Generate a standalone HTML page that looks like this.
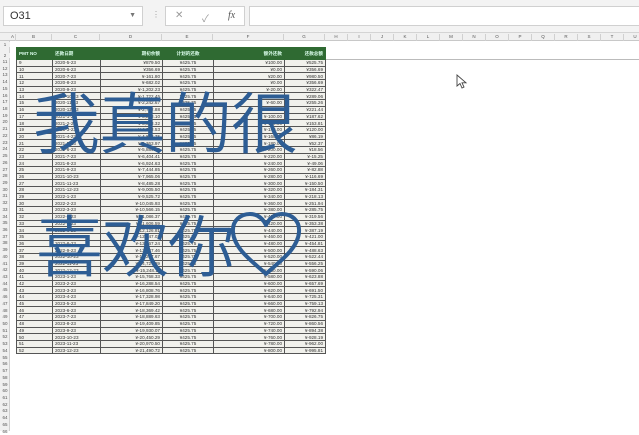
<!DOCTYPE html>
<html><head><meta charset="utf-8"><style>
*{margin:0;padding:0;box-sizing:border-box}
body{width:639px;height:431px;overflow:hidden;background:#fff;font-family:"Liberation Sans","Noto Sans CJK SC",sans-serif;position:relative}
.top{position:absolute;left:0;top:0;width:639px;height:33px;background:#f3f3f3;border-bottom:1px solid #d4d4d4}
.nb{position:absolute;left:3px;top:6px;width:140px;height:20px;background:#fff;border:1px solid #d0d0d0;font-size:11px;color:#333;padding:3px 6px}
.nb span{position:absolute;right:6px;top:5px;font-size:7px;color:#777}
.fx{position:absolute;left:165px;top:6px;width:80px;height:20px;background:#fff;border:1px solid #d0d0d0;font-size:10px;color:#999}
.fb{position:absolute;left:249px;top:6px;width:392px;height:20px;background:#fff;border:1px solid #d0d0d0}
.ch{position:absolute;left:0;top:33px;width:639px;height:8px;background:#f0f0f0;border-bottom:1px solid #c8c8c8;font-size:4.5px;color:#555}
.ch div{position:absolute;top:1px;text-align:center;border-right:1px solid #d0d0d0;height:7px}
.rh{position:absolute;left:0;width:10px;font-size:4.5px;color:#555;text-align:center;background:#f0f0f0}
table{position:absolute;left:16px;top:47px;border-collapse:collapse;font-size:4.6px;color:#333;table-layout:fixed}
td{border:1px solid #555;height:6.7px;line-height:5px;padding:0 2px;white-space:nowrap;overflow:hidden;background:#f1f1ec}
tr.h td{background:#2f6a32;color:#dfe;height:12px;font-weight:bold;border-color:#2f6a32}
td:nth-child(3),td:nth-child(5),td:nth-child(6){text-align:right}
td:nth-child(4),td:nth-child(7){text-align:center}
.big{position:absolute;font-family:"Noto Sans CJK SC",sans-serif;font-weight:350;color:#2d5d94;font-size:67px;line-height:1;letter-spacing:-1px;white-space:nowrap}
</style></head><body>
<div class="top">
<div class="nb">O31<span>▼</span></div>
<div style="position:absolute;left:152px;top:10px;font-size:8px;color:#999">⋮</div>
<div class="fx"><span style="position:absolute;left:9px;top:3px">✕</span><span style="position:absolute;left:36px;top:3px">✓</span><span style="position:absolute;left:62px;top:3px;font-style:italic;font-family:'Liberation Serif';color:#555">fx</span></div>
<div class="fb"></div>
</div>
<div class="ch">
<div style="left:10px;width:6px">A</div><div style="left:16px;width:36px">B</div><div style="left:52px;width:48px">C</div><div style="left:100px;width:62px">D</div><div style="left:162px;width:51px">E</div><div style="left:213px;width:71px">F</div><div style="left:284px;width:41px">G</div>
<div style="left:325px;width:23px">H</div><div style="left:348px;width:23px">I</div><div style="left:371px;width:23px">J</div><div style="left:394px;width:23px">K</div><div style="left:417px;width:23px">L</div><div style="left:440px;width:23px">M</div><div style="left:463px;width:23px">N</div><div style="left:486px;width:23px">O</div><div style="left:509px;width:23px">P</div><div style="left:532px;width:23px">Q</div><div style="left:555px;width:23px">R</div><div style="left:578px;width:23px">S</div><div style="left:601px;width:23px">T</div><div style="left:624px;width:23px">U</div>
</div>
<div style="position:absolute;left:0;top:41px;width:10px;height:390px;background:#f0f0f0;border-right:1px solid #d0d0d0"></div>
<div class="rh" style="top:42px">1</div><div class="rh" style="top:53px">2</div>
<div style="position:absolute;left:325px;top:59px;width:314px;height:1px;background:#bbb"></div>
<div id="rn" style="position:absolute;left:0;top:59px;width:10px;font-size:4.5px;color:#555;text-align:center;line-height:6.72px">11<br>12<br>13<br>14<br>15<br>16<br>17<br>18<br>19<br>20<br>21<br>22<br>23<br>24<br>25<br>26<br>27<br>28<br>29<br>30<br>31<br>32<br>33<br>34<br>35<br>36<br>37<br>38<br>39<br>40<br>41<br>42<br>43<br>44<br>45<br>46<br>47<br>48<br>49<br>50<br>51<br>52<br>53<br>54<br>55<br>56<br>57<br>58<br>59<br>60<br>61<br>62<br>63<br>64<br>65<br>66</div>
<table>
<colgroup><col style="width:36px"><col style="width:48px"><col style="width:62px"><col style="width:51px"><col style="width:71px"><col style="width:41px"></colgroup>
<tr class="h"><td>PMT NO</td><td>还款日期</td><td>期初余额</td><td>计划的还款</td><td>额外还款</td><td>还款总额</td></tr>
<tr><td>9</td><td>2020-5-23</td><td>¥879.50</td><td>¥425.75</td><td>¥100.00</td><td>¥525.75</td></tr>
<tr><td>10</td><td>2020-6-23</td><td>¥356.69</td><td>¥425.75</td><td>¥0.00</td><td>¥356.69</td></tr>
<tr><td>11</td><td>2020-7-23</td><td>¥-161.80</td><td>¥425.75</td><td>¥20.00</td><td>¥980.50</td></tr>
<tr><td>12</td><td>2020-8-23</td><td>¥-682.02</td><td>¥425.75</td><td>¥0.00</td><td>¥356.69</td></tr>
<tr><td>13</td><td>2020-9-23</td><td>¥-1,202.23</td><td>¥425.75</td><td>¥-20.00</td><td>¥322.47</td></tr>
<tr><td>14</td><td>2020-10-23</td><td>¥-1,722.45</td><td>¥425.75</td><td>¥-40.00</td><td>¥289.06</td></tr>
<tr><td>15</td><td>2020-11-23</td><td>¥-2,242.67</td><td>¥425.75</td><td>¥-60.00</td><td>¥255.26</td></tr>
<tr><td>16</td><td>2020-12-23</td><td>¥-2,762.88</td><td>¥425.75</td><td>¥-80.00</td><td>¥221.44</td></tr>
<tr><td>17</td><td>2021-1-23</td><td>¥-3,283.10</td><td>¥425.75</td><td>¥-100.00</td><td>¥187.62</td></tr>
<tr><td>18</td><td>2021-2-23</td><td>¥-3,803.32</td><td>¥425.75</td><td>¥-120.00</td><td>¥153.81</td></tr>
<tr><td>19</td><td>2021-3-23</td><td>¥-4,323.53</td><td>¥425.75</td><td>¥-140.00</td><td>¥120.00</td></tr>
<tr><td>20</td><td>2021-4-23</td><td>¥-4,843.75</td><td>¥425.75</td><td>¥-160.00</td><td>¥86.19</td></tr>
<tr><td>21</td><td>2021-5-23</td><td>¥-5,363.97</td><td>¥425.75</td><td>¥-180.00</td><td>¥52.37</td></tr>
<tr><td>22</td><td>2021-6-23</td><td>¥-5,884.19</td><td>¥425.75</td><td>¥-200.00</td><td>¥18.56</td></tr>
<tr><td>23</td><td>2021-7-23</td><td>¥-6,404.41</td><td>¥425.75</td><td>¥-220.00</td><td>¥-15.25</td></tr>
<tr><td>24</td><td>2021-8-23</td><td>¥-6,924.63</td><td>¥425.75</td><td>¥-240.00</td><td>¥-49.06</td></tr>
<tr><td>25</td><td>2021-9-23</td><td>¥-7,444.85</td><td>¥425.75</td><td>¥-260.00</td><td>¥-82.88</td></tr>
<tr><td>26</td><td>2021-10-23</td><td>¥-7,965.06</td><td>¥425.75</td><td>¥-280.00</td><td>¥-116.69</td></tr>
<tr><td>27</td><td>2021-11-23</td><td>¥-8,485.28</td><td>¥425.75</td><td>¥-300.00</td><td>¥-150.50</td></tr>
<tr><td>28</td><td>2021-12-23</td><td>¥-9,005.50</td><td>¥425.75</td><td>¥-320.00</td><td>¥-184.31</td></tr>
<tr><td>29</td><td>2022-1-23</td><td>¥-9,525.72</td><td>¥425.75</td><td>¥-340.00</td><td>¥-218.13</td></tr>
<tr><td>30</td><td>2022-2-23</td><td>¥-10,045.93</td><td>¥425.75</td><td>¥-360.00</td><td>¥-251.94</td></tr>
<tr><td>31</td><td>2022-3-23</td><td>¥-10,566.15</td><td>¥425.75</td><td>¥-380.00</td><td>¥-285.75</td></tr>
<tr><td>32</td><td>2022-4-23</td><td>¥-11,086.37</td><td>¥425.75</td><td>¥-400.00</td><td>¥-319.56</td></tr>
<tr><td>33</td><td>2022-5-23</td><td>¥-11,606.59</td><td>¥425.75</td><td>¥-420.00</td><td>¥-353.38</td></tr>
<tr><td>34</td><td>2022-6-23</td><td>¥-12,126.81</td><td>¥425.75</td><td>¥-440.00</td><td>¥-387.19</td></tr>
<tr><td>35</td><td>2022-7-23</td><td>¥-12,647.02</td><td>¥425.75</td><td>¥-460.00</td><td>¥-421.00</td></tr>
<tr><td>36</td><td>2022-8-23</td><td>¥-13,167.24</td><td>¥425.75</td><td>¥-480.00</td><td>¥-454.81</td></tr>
<tr><td>37</td><td>2022-9-23</td><td>¥-13,687.46</td><td>¥425.75</td><td>¥-500.00</td><td>¥-488.63</td></tr>
<tr><td>38</td><td>2022-10-23</td><td>¥-14,207.67</td><td>¥425.75</td><td>¥-520.00</td><td>¥-522.44</td></tr>
<tr><td>39</td><td>2022-11-23</td><td>¥-14,727.89</td><td>¥425.75</td><td>¥-540.00</td><td>¥-556.25</td></tr>
<tr><td>40</td><td>2022-12-23</td><td>¥-15,248.11</td><td>¥425.75</td><td>¥-560.00</td><td>¥-590.06</td></tr>
<tr><td>41</td><td>2023-1-23</td><td>¥-15,768.33</td><td>¥425.75</td><td>¥-580.00</td><td>¥-623.88</td></tr>
<tr><td>42</td><td>2023-2-23</td><td>¥-16,288.54</td><td>¥425.75</td><td>¥-600.00</td><td>¥-657.69</td></tr>
<tr><td>43</td><td>2023-3-23</td><td>¥-16,808.76</td><td>¥425.75</td><td>¥-620.00</td><td>¥-691.50</td></tr>
<tr><td>44</td><td>2023-4-23</td><td>¥-17,328.98</td><td>¥425.75</td><td>¥-640.00</td><td>¥-725.31</td></tr>
<tr><td>45</td><td>2023-5-23</td><td>¥-17,849.20</td><td>¥425.75</td><td>¥-660.00</td><td>¥-759.13</td></tr>
<tr><td>46</td><td>2023-6-23</td><td>¥-18,369.42</td><td>¥425.75</td><td>¥-680.00</td><td>¥-792.94</td></tr>
<tr><td>47</td><td>2023-7-23</td><td>¥-18,889.63</td><td>¥425.75</td><td>¥-700.00</td><td>¥-826.75</td></tr>
<tr><td>48</td><td>2023-8-23</td><td>¥-19,409.85</td><td>¥425.75</td><td>¥-720.00</td><td>¥-860.56</td></tr>
<tr><td>49</td><td>2023-9-23</td><td>¥-19,930.07</td><td>¥425.75</td><td>¥-740.00</td><td>¥-894.38</td></tr>
<tr><td>50</td><td>2023-10-23</td><td>¥-20,450.29</td><td>¥425.75</td><td>¥-760.00</td><td>¥-928.19</td></tr>
<tr><td>51</td><td>2023-11-23</td><td>¥-20,970.50</td><td>¥425.75</td><td>¥-780.00</td><td>¥-962.00</td></tr>
<tr><td>52</td><td>2023-12-23</td><td>¥-21,490.72</td><td>¥425.75</td><td>¥-800.00</td><td>¥-995.81</td></tr>
</table>
<div class="big" style="left:33px;top:86px">我真的很</div>
<div class="big" style="left:36px;top:209px">喜欢你</div>
<svg style="position:absolute;left:228px;top:210px" width="76" height="68" viewBox="0 0 76 68"><path d="M38 64 C28 54 6 40 5 22 C4 10 13 4 22 4 C30 4 35 9 38 15 C41 9 46 4 54 4 C63 4 72 10 71 22 C70 40 48 54 38 64 Z" fill="none" stroke="#2d5d94" stroke-width="4" stroke-linejoin="round"/></svg>
<svg style="position:absolute;left:456px;top:74px" width="12" height="16" viewBox="0 0 12 16"><path d="M1 1 L1 12 L4 9.5 L6 14 L8 13 L6 8.8 L10 8.8 Z" fill="#fff" stroke="#444" stroke-width="0.9"/></svg>
</body></html>
